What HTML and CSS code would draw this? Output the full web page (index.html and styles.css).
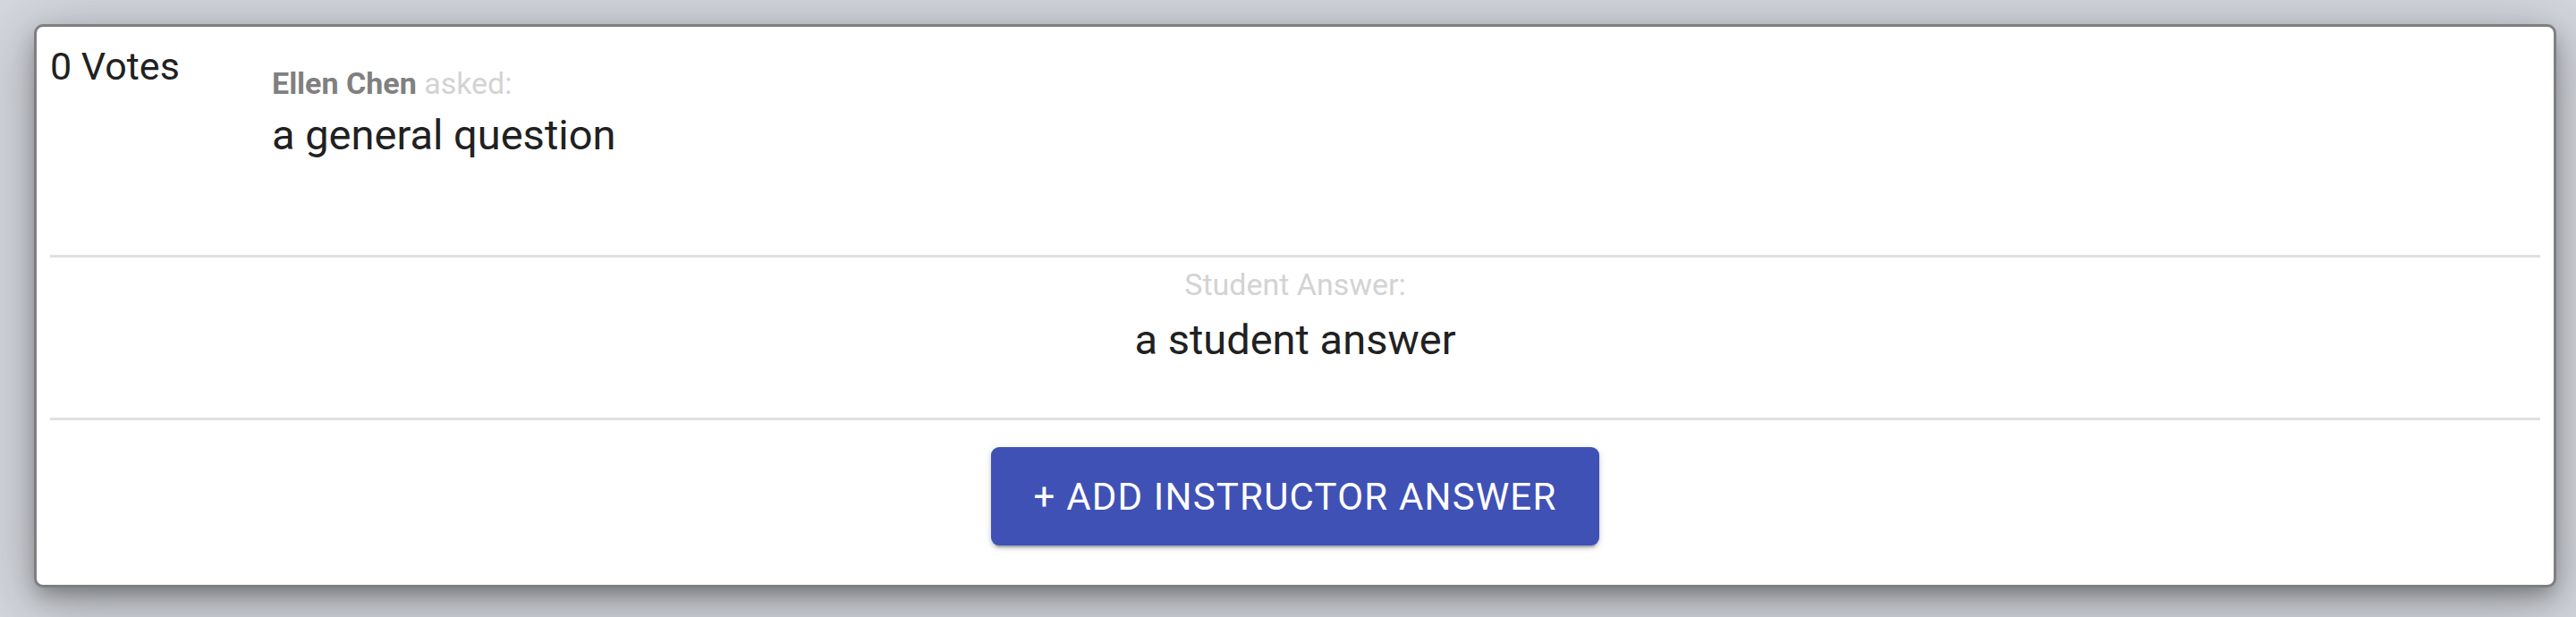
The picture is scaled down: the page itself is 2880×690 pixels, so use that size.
FILE: index.html
```html
<!DOCTYPE html>
<html lang="en">
<head>
<meta charset="utf-8">
<title>Question</title>
<link rel="stylesheet" href="styles.css">
</head>
<body>
<div class="page">
  <div class="card">
    <div class="question-row">
      <div class="votes">0 Votes</div>
      <div class="question">
        <div class="asker"><span class="name">Ellen Chen</span> <span class="asked">asked:</span></div>
        <div class="question-text">a general question</div>
      </div>
    </div>
    <div class="divider"></div>
    <div class="answer">
      <div class="answer-label">Student Answer:</div>
      <div class="answer-text">a student answer</div>
    </div>
    <div class="divider"></div>
    <div class="actions">
      <button class="add-btn" type="button">+ Add Instructor Answer</button>
    </div>
  </div>
</div>
</body>
</html>
```

FILE: styles.css
```css
html, body {
  margin: 0;
  padding: 0;
}
body {
  background: #d5d9df;
  font-family: Roboto, "Liberation Sans", sans-serif;
  color: #212121;
}
.page {
  padding: 27px 22px 33px 38px;
}
.card {
  background: #fff;
  border: 3px solid #7f7f7f;
  border-radius: 10px;
  padding: 0 15px;
  height: 624px;
  box-sizing: content-box;
  box-shadow: 0 10px 24px -4px rgba(0,0,0,0.35), 0 20px 60px 6px rgba(0,0,0,0.14), 0 8px 80px 14px rgba(0,0,0,0.10);
  display: flex;
  flex-direction: column;
}
.question-row {
  display: flex;
  height: 236px;
  padding-top: 19px;
}
.votes {
  width: 248px;
  font-size: 43px;
  line-height: 1.2;
}
.question {
  padding-top: 24px;
}
.asker {
  font-size: 34px;
  line-height: 1.2;
}
.name {
  font-weight: 700;
  color: #808080;
}
.asked {
  color: #d3d3d3;
}
.question-text {
  font-size: 47px;
  line-height: 1.2;
  margin-top: 9px;
}
.divider {
  height: 3px;
  background: #e0e0e0;
}
.answer {
  display: flex;
  flex-direction: column;
  align-items: center;
  padding-top: 10px;
  height: 169px;
}
.answer-label {
  font-size: 34px;
  line-height: 1.2;
  color: #d3d3d3;
}
.answer-text {
  font-size: 47px;
  line-height: 1.2;
  margin-top: 13px;
}
.actions {
  display: flex;
  justify-content: center;
  padding-top: 30px;
}
.add-btn {
  width: 680px;
  height: 110px;
  background: #3f51b5;
  color: #fff;
  border: none;
  border-radius: 9px;
  font-family: Roboto, "Liberation Sans", sans-serif;
  font-size: 42px;
  letter-spacing: 0.02857em;
  text-transform: uppercase;
  box-shadow: 0 5px 2px -3px rgba(0,0,0,0.2), 0 3px 4px 0 rgba(0,0,0,0.14), 0 2px 10px 0 rgba(0,0,0,0.12);
  padding: 0;
  white-space: nowrap;
}
```
